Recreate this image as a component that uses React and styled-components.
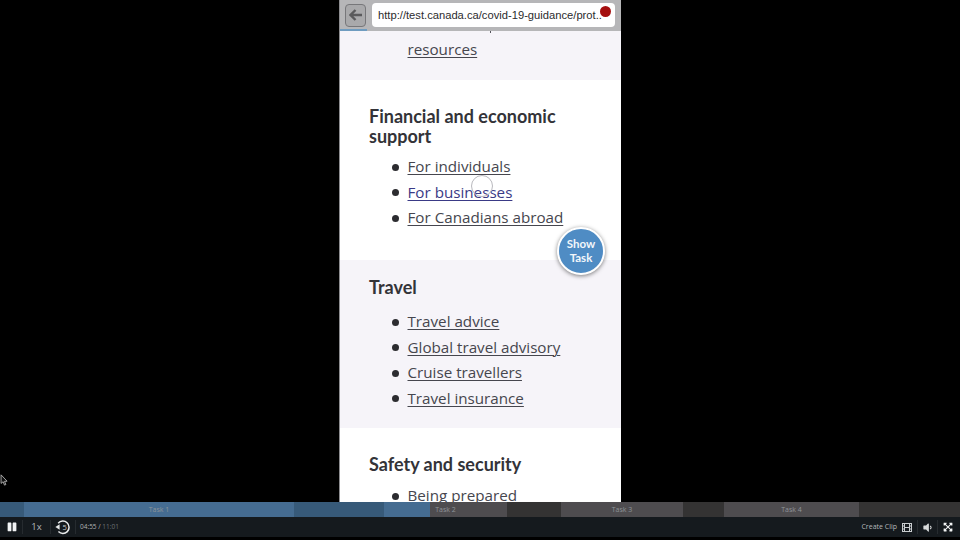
import React from "react"
import styled, { createGlobalStyle } from "styled-components"
import { FaPause, FaVolumeDown, FaExpandArrowsAlt } from "react-icons/fa"

const GlobalStyle = createGlobalStyle`
  html, body {
    margin: 0;
    padding: 0;
    background: #000;
  }
`

const segments = [
  { width: 24, tone: "blueDark" },
  { width: 270, tone: "blue", label: "Task 1" },
  { width: 90, tone: "blueDark" },
  { width: 46, tone: "blue" },
  { width: 77, tone: "grey", label: "Task 2", inset: 46 },
  { width: 54, tone: "dark" },
  { width: 122, tone: "grey", label: "Task 3" },
  { width: 41, tone: "dark" },
  { width: 135, tone: "grey", label: "Task 4" },
  { width: 101, tone: "dark" },
]

const tones = {
  blue: "#456c91",
  blueDark: "#375a79",
  grey: "#4e4c4f",
  dark: "#343333",
}

const App = () => (
  <Page>
    <GlobalStyle />
    <Stage>
      <Cursor viewBox="0 0 10 14">
        <path d="M1 1 L1 11 L3.4 9 L5 13 L6.6 12.3 L5 8.6 L8 8.4 Z" fill="#111" stroke="#bbb" strokeWidth="1" />
      </Cursor>
      <Phone>
        <Toolbar>
          <BackButton>
            <svg width="14" height="12" viewBox="0 0 14 12">
              <path d="M6.5 1 L1.5 6 L6.5 11 M2 6 H13" fill="none" stroke="#5a5a5c" strokeWidth="2.4" />
            </svg>
          </BackButton>
          <Address>http://test.canada.ca/covid-19-guidance/prot..</Address>
          <RecordDot />
          <LoadBar />
        </Toolbar>
        <Band $tint $height={49}>
          <Descender />
          <LinkList $top={6}>
            <Item $hideBullet><PageLink>resources</PageLink></Item>
          </LinkList>
        </Band>
        <Band $height={180}>
          <Heading $top={26}>Financial and economic support</Heading>
          <LinkList $top={8}>
            <Item><PageLink>For individuals</PageLink></Item>
            <Item><PageLink $active>For businesses</PageLink></Item>
            <Item><PageLink>For Canadians abroad</PageLink></Item>
          </LinkList>
          <TapRing />
        </Band>
        <Band $tint $height={168}>
          <Heading $top={17}>Travel</Heading>
          <LinkList $top={12}>
            <Item><PageLink>Travel advice</PageLink></Item>
            <Item><PageLink>Global travel advisory</PageLink></Item>
            <Item><PageLink>Cruise travellers</PageLink></Item>
            <Item><PageLink>Travel insurance</PageLink></Item>
          </LinkList>
        </Band>
        <Band $height={74}>
          <Heading $top={26}>Safety and security</Heading>
          <LinkList $top={9}>
            <Item><PageLink>Being prepared</PageLink></Item>
          </LinkList>
        </Band>
        <ShowTask>Show<br />Task</ShowTask>
      </Phone>
    </Stage>
    <Timeline>
      {segments.map((s, i) => (
        <Segment key={i} $tone={s.tone} $inset={s.inset} style={{ width: s.width }}>
          {s.label}
        </Segment>
      ))}
    </Timeline>
    <Controls>
      <PlayButton><FaPause size={10} color="#f2f4f5" /></PlayButton>
      <Speed>1x</Speed>
      <Replay>
        <svg width="16" height="16" viewBox="0 0 16 16">
          <path d="M3.2 4.2 A6.2 6.2 0 1 1 3.4 12.6" fill="none" stroke="#e8eaeb" strokeWidth="1.5" />
          <path d="M0.4 8 L4.6 5.2 L4.6 10.8 Z" fill="#e8eaeb" />
          <text x="7.4" y="10.8" fontSize="7.5" fontFamily="Open Sans, sans-serif" fill="#c9cccd">5</text>
        </svg>
      </Replay>
      <Clock>04:55 / <span>11:01</span></Clock>
      <Spacer />
      <ClipLabel>Create Clip</ClipLabel>
      <IconCell $wide={20}>
        <svg width="10" height="9" viewBox="0 0 10 9">
          <rect x="0.5" y="0.5" width="9" height="8" fill="none" stroke="#c9cdcf" />
          <path d="M2.5 0.5 V8.5 M7.5 0.5 V8.5 M0.5 3 H2.5 M0.5 6 H2.5 M7.5 3 H9.5 M7.5 6 H9.5 M2.5 4.5 H7.5" stroke="#c9cdcf" />
        </svg>
      </IconCell>
      <IconCell $divider $wide={20}><FaVolumeDown size={11} color="#d8dbdc" /></IconCell>
      <IconCell $divider $wide={23} $nudge={3}><FaExpandArrowsAlt size={10} color="#f1f3f4" /></IconCell>
    </Controls>
  </Page>
)

const Page = styled.div`
  width: 960px;
  height: 540px;
  background: #000;
  overflow: hidden;
  display: flex;
  flex-direction: column;
`

const Stage = styled.div`
  position: relative;
  height: 502px;
  display: flex;
  justify-content: center;
`

const Cursor = styled.svg`
  position: absolute;
  left: 0;
  top: 474px;
  width: 9px;
  height: 12px;
`

const Phone = styled.div`
  position: relative;
  width: 282px;
  height: 502px;
  overflow: hidden;
  background: #fff;
  border-left: 1px solid #8d8d90;
  box-sizing: border-box;
`

const Toolbar = styled.div`
  position: relative;
  height: 31px;
  box-sizing: border-box;
  padding: 3px 6px 4px 5px;
  background: #b6b6b8;
  display: flex;
  align-items: center;
  gap: 6px;
`

const BackButton = styled.div`
  width: 21px;
  height: 23px;
  box-sizing: border-box;
  border: 1px solid #77777a;
  border-radius: 4px;
  background: #a9a9ab;
  display: flex;
  align-items: center;
  justify-content: center;
`

const Address = styled.div`
  width: 243px;
  height: 24px;
  box-sizing: border-box;
  padding-left: 6px;
  background: #fff;
  border-radius: 4px;
  font: 11.2px/24px "Liberation Sans", Arial, sans-serif;
  color: #2b2b2d;
  white-space: nowrap;
`

const RecordDot = styled.div`
  position: absolute;
  right: 10px;
  top: 6px;
  width: 11px;
  height: 11px;
  border-radius: 50%;
  background: #a50f0f;
`

const LoadBar = styled.div`
  position: absolute;
  left: 0;
  bottom: 0;
  width: 27px;
  height: 2px;
  background: #6f9cc0;
`

const Band = styled.section`
  position: relative;
  height: ${({ $height }) => $height}px;
  box-sizing: border-box;
  padding: 0 28px 0 29px;
  overflow: hidden;
  background: ${({ $tint }) => ($tint ? "#f6f4f9" : "#fff")};
`

const Descender = styled.div`
  position: absolute;
  left: 150px;
  top: 0;
  width: 1px;
  height: 2px;
  background: #55555c;
`

const Heading = styled.h2`
  margin: ${({ $top }) => $top}px 0 0;
  font: 700 18px/20px Lato, sans-serif;
  color: #333338;
`

const LinkList = styled.ul`
  list-style: none;
  margin: ${({ $top }) => $top}px 0 0;
  padding: 0 0 0 38.5px;
`

const Item = styled.li`
  position: relative;
  height: 25.5px;
  font: 15.2px/25.5px "Open Sans", sans-serif;

  &::before {
    content: "";
    display: ${({ $hideBullet }) => ($hideBullet ? "none" : "block")};
    position: absolute;
    left: -16px;
    top: 9.5px;
    width: 7px;
    height: 7px;
    border-radius: 50%;
    background: #2c2c30;
  }
`

const PageLink = styled.span`
  color: ${({ $active }) => ($active ? "#3a3a86" : "#46464e")};
  text-decoration: underline;
  text-decoration-thickness: 1px;
  text-underline-offset: 2px;
`

const TapRing = styled.div`
  position: absolute;
  left: 131px;
  top: 95px;
  width: 22px;
  height: 22px;
  box-sizing: border-box;
  border: 1.5px solid #b9b9be;
  border-radius: 50%;
`

const ShowTask = styled.div`
  position: absolute;
  left: 217px;
  top: 227px;
  width: 48px;
  height: 48px;
  box-sizing: border-box;
  border: 2px solid #fff;
  border-radius: 50%;
  background: #4f8cc4;
  box-shadow: 0 1px 4px rgba(0, 0, 0, 0.5);
  display: flex;
  align-items: center;
  justify-content: center;
  text-align: center;
  font: 700 11.5px/14px Lato, sans-serif;
  color: #f2f6fa;
`

const Timeline = styled.div`
  height: 15px;
  display: flex;
`

const Segment = styled.div`
  box-sizing: border-box;
  padding-right: ${({ $inset }) => $inset || 0}px;
  background: ${({ $tone }) => tones[$tone]};
  display: flex;
  align-items: center;
  justify-content: center;
  font: 7px/15px "Open Sans", sans-serif;
  color: #8e9499;
  white-space: nowrap;
`

const Controls = styled.div`
  height: 20px;
  background: #151a1e;
  display: flex;
  align-items: center;
`

const PlayButton = styled.div`
  width: 23px;
  height: 14px;
  padding-left: 1px;
  box-sizing: border-box;
  display: flex;
  align-items: center;
  justify-content: center;
  border-right: 1px solid #262b2f;
`

const Speed = styled.div`
  width: 27px;
  height: 14px;
  font: 9.5px/14px "Open Sans", sans-serif;
  color: #b4b8ba;
  text-align: center;
  border-right: 1px solid #262b2f;
`

const Replay = styled.div`
  width: 24px;
  height: 14px;
  display: flex;
  align-items: center;
  justify-content: center;
  border-right: 1px solid #262b2f;
`

const Clock = styled.div`
  margin-left: 4px;
  font: 6.5px/14px "Open Sans", sans-serif;
  color: #aeb2b5;

  span {
    color: #6b7074;
  }
`

const Spacer = styled.div`
  flex: 1;
`

const ClipLabel = styled.div`
  font: 7px/14px "Open Sans", sans-serif;
  color: #b4b8ba;
`

const IconCell = styled.div`
  width: ${({ $wide }) => $wide}px;
  height: 14px;
  box-sizing: border-box;
  padding-right: ${({ $nudge }) => $nudge || 0}px;
  display: flex;
  align-items: center;
  justify-content: center;
  border-left: ${({ $divider }) => ($divider ? "1px solid #262b2f" : "none")};
`

export default App
